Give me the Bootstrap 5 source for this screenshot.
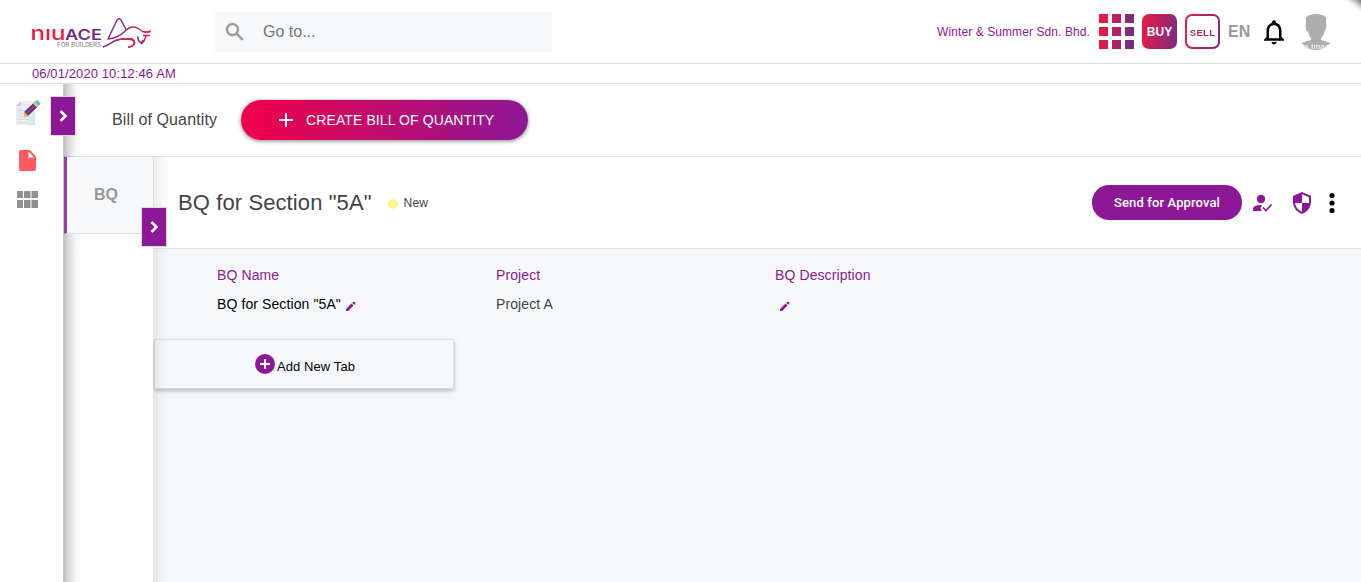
<!DOCTYPE html>
<html lang="en">
<head>
<meta charset="utf-8">
<meta name="viewport" content="width=device-width, initial-scale=1">
<title>Bill of Quantity</title>
<link href="https://cdn.jsdelivr.net/npm/bootstrap@5.3.0/dist/css/bootstrap.min.css" rel="stylesheet">
<style>
:root{--plum:#8c1896;--pale:#f6f8fa;--rule:#dee2e6}
body{font-family:"Liberation Sans",Arial,sans-serif;font-size:14px;line-height:20px;color:#444;overflow:hidden}
svg{display:block;flex:none}
.plum{color:var(--plum)}
.topbar{height:64px;border-bottom:1px solid #dedede;padding-left:31px;padding-right:27px}
.topbar::after{content:"";position:absolute;right:0;top:0;width:18px;height:12px;background:linear-gradient(38deg,transparent 50%,#0000001a 66%,#00000088 100%)}
.logo{margin-top:5px}
.goto{width:337px;height:40px;margin:0 0 0 63px;background:var(--pale);color:#757575;font-size:16px;padding-left:8px;gap:16px}
.company{font-size:12px;letter-spacing:.09px;margin-right:9px}
.tile{width:35px;height:35px;border-radius:7px;font-weight:700}
.buy{background:linear-gradient(100deg,#f0183f,#782b85);color:#fff;font-size:12px;margin-left:8px}
.sell{border:2.5px solid transparent;background:linear-gradient(#fff,#fff) padding-box,linear-gradient(100deg,#f0183f,#782b85) border-box;margin-left:8px;font-size:9.5px;letter-spacing:.3px}
.sell span{background:linear-gradient(90deg,#d01f4e,#782b85);-webkit-background-clip:text;color:transparent;margin-top:2px}
.lang{font-size:16px;font-weight:700;color:#999;margin-left:8px;width:22px}
.clock{height:20px;border-bottom:1px solid #dedede;padding-left:32px;font-size:13px;letter-spacing:.1px;line-height:19px}
.workspace{height:498px}
.rail{width:64px;height:498px;border-right:1px solid #ccc;z-index:3;position:relative}
.rail::after{content:"";position:absolute;left:64px;top:0;bottom:0;width:16px;background:linear-gradient(90deg,rgba(0,0,0,.24),rgba(0,0,0,.12) 35%,rgba(0,0,0,.03) 75%,transparent)}
.toggle{position:absolute;width:26px;height:40px;background:var(--plum);border:1px solid #d7dbe2;z-index:5}
.toggle.one{left:50px;top:12px}
.toggle.two{left:77px;top:50px}
.toolbar{height:73px;border-bottom:1px solid var(--rule);padding-left:48px;gap:24px}
.toolbar .title{font-size:16px;letter-spacing:.12px}
.create{height:40px;width:287px;border-radius:20px;background:linear-gradient(90deg,#f10048,#8c1896);color:#fff;box-shadow:0 1px 4px rgba(0,0,0,.5);padding-left:37px;gap:12px;font-size:14px;letter-spacing:.1px}
.tabs-side{width:89px;height:425px;background:#fff}
.tabs-side::after{content:"";position:absolute;left:89px;top:0;bottom:0;width:16px;background:linear-gradient(90deg,rgba(0,0,0,.075),rgba(0,0,0,.03) 50%,transparent)}
.bq{position:relative;z-index:4;height:77px;background:var(--pale);border-left:3px solid #9440a0;border-bottom:1px solid #dcdfe4;border-right:1px solid #dcdfe4;color:#999;font-size:16px;font-weight:700;width:90px;padding-right:8px}
.content{background:var(--pale)}
.heading{height:92px;background:#fff;border-bottom:1px solid var(--rule);padding-left:25px;padding-right:23px}
.heading h1{font-size:22px;font-weight:400;letter-spacing:.1px;line-height:26px;color:#444}
.dot{width:10px;height:10px;border-radius:50%;background:#fff585;margin:2px 6px 0 16px}
.status{font-size:12px;letter-spacing:.15px;margin-top:1px}
.send{width:150px;height:35px;border-radius:17px;background:var(--plum);color:#fff;font-family:Roboto,sans-serif;font-weight:500;font-size:13px;letter-spacing:.12px}
.fields{padding:16px 0 0 64px;letter-spacing:.1px}
.field{width:279px}
.field .value{margin-top:9px;height:20px}
.newtab{width:300px;height:50px;border:1px solid #dcdfe5;box-shadow:0 2px 4px rgba(0,0,0,.25);margin:25px 0 0 1px;padding-left:2px;color:#000;font-size:13px;letter-spacing:.1px}
</style>
</head>
<body>
<header class="topbar d-flex align-items-center position-relative overflow-hidden">
  <svg class="logo" width="121" height="34" viewBox="31 17 121 34" fill="none">
    <defs><linearGradient id="g" x1="103" y1="0" x2="151" y2="0" gradientUnits="userSpaceOnUse"><stop stop-color="#78308b"/><stop offset=".5" stop-color="#9b2a7b"/><stop offset="1" stop-color="#f01d3c"/></linearGradient></defs>
    <text x="30.500" y="40" textLength="35" lengthAdjust="spacingAndGlyphs" font-family="Inter" font-size="19" font-weight="500" fill="#ed1b43">nıu</text>
    <text x="65" y="40" textLength="37" lengthAdjust="spacingAndGlyphs" font-family="Inter" font-size="14.500" font-weight="600" fill="#782b85">ACE</text>
    <text x="57" y="47" textLength="44" lengthAdjust="spacingAndGlyphs" font-family="Inter" font-size="5.500" fill="#777">FOR BUILDERS</text>
    <path stroke="url(#g)" stroke-width="1.500" stroke-linejoin="round" d="M126 29.500L121 20Q119 17 116.500 21L108 39Q118 38 124 32Q132 24 139 29Q142 31.500 144 32H148.500L150.500 31"/>
    <path d="M103 47C112 44 113 39 124 39C130 39 132 38 134 41C136 45 131 47 128 47" stroke="#782b85" stroke-width="1.500"/>
    <path d="M116 40.200Q121 39 124 39C130 39 132 38 134 41C136 45 131 47 128 47M144 32H148.500L150.500 31M143 35.500H150M146 35.500Q145 41 141.500 43" stroke="#ed1b43" stroke-width="1.500"/>
    <path d="M138 36.500Q137 40 141.500 43.500L143 40" stroke="#782b85" stroke-width="1.500"/>
  </svg>
  <div class="goto d-flex align-items-center">
    <svg width="24" height="24" viewBox="0 0 24 24" fill="#999"><path stroke="#999" stroke-width=".4" d="M15.500 14h-.8l-.3-.3A6.500 6.500 0 1 0 13.700 14.400l.3.3v.8l5 5 1.500-1.500-5-5zm-6 0A4.500 4.500 0 1 1 9.500 5a4.500 4.500 0 0 1 0 9z"/></svg>
    <span>Go to...</span>
  </div>
  <span class="company plum ms-auto">Winter &amp; Summer Sdn. Bhd.</span>
  <svg width="35" height="35" viewBox="0 0 35 35"><defs><linearGradient id="t" x1="0" y1="0" x2="35" y2="5" gradientUnits="userSpaceOnUse"><stop offset=".1" stop-color="#f0183f"/><stop offset="1" stop-color="#782b85"/></linearGradient></defs><path fill="url(#t)" d="M0 0h9v9H0zM13 0h9v9h-9zM26 0h9v9h-9zM0 13h9v9H0zM13 13h9v9h-9zM26 13h9v9h-9zM0 26h9v9H0zM13 26h9v9h-9zM26 26h9v9h-9z"/></svg>
  <div class="tile buy d-flex align-items-center justify-content-center">BUY</div>
  <div class="tile sell d-flex align-items-center justify-content-center"><span>SELL</span></div>
  <div class="lang">EN</div>
  <svg width="30" height="30" viewBox="0 0 24 24" style="margin-left:9px"><path d="M12 22c1.100 0 2-.9 2-2h-4c0 1.100.9 2 2 2zm6-6v-5c0-3.070-1.630-5.640-4.500-6.320V4a1.500 1.500 0 0 0-3 0v.68C7.640 5.360 6 7.920 6 11v5l-2 2v1h16v-1l-2-2zm-2 1H8v-6c0-2.480 1.510-4.500 4-4.500s4 2.020 4 4.500v6z"/></svg>
  <svg style="margin-left:9px" width="36" height="36" viewBox="0 0 36 36"><defs><clipPath id="c"><circle cx="18" cy="18" r="18"/></clipPath></defs><g clip-path="url(#c)"><path fill="#aeaeae" d="M11 0h14q3 1 3 5v5q1 1 0 5-1 1-1.500 3-1 4-3.500 6v2q4 1 12 4v6H0v-6q9-3 13-4v-2q-2-2-3-6-2-1-2-3-1-4 0-5V5q0-4 3-5z"/><text x="0" y="35" font-size="8" fill="#fff" textLength="36">No Image</text></g></svg>
</header>
<div class="clock plum">06/01/2020 10:12:46 AM</div>

<div class="workspace d-flex position-relative overflow-hidden">
  <nav class="rail bg-white flex-shrink-0">
    <svg width="63" height="130" viewBox="0 84 63 130">
      <path fill="#e9edf2" d="M21 101h14v24H16v-19z"/><path fill="#c5ced6" d="M21 101v5h-5z"/>
      <path stroke="#d3dae1" d="M18 110.500h14M18 113.500h12M18 116.500h12M18 119.500h14M18 122.500h12"/><path fill="#d8e7f0" d="M35 108v17h-8z"/>
      <path stroke="#62306f" stroke-width="5.500" d="M26 114L36 104.500"/><path stroke="#8c3a93" stroke-width="2" d="M26 114L36 104.500"/>
      <path fill="#f8b64c" d="M24 112l4 4-4 1.500z"/><path stroke="#f8c76f" stroke-width="5.500" d="M35 105.500l1.500-1.500"/><path stroke="#5bc6c0" stroke-width="5.500" d="M36.500 104l2.500-2.300"/>
      <path fill="#ff5a5f" d="M21 150h9l6 6.500V169q0 2-2 2H21q-2 0-2-2v-17q0-2 2-2z"/><path fill="#fff" d="M28.500 151.500v6H34z"/>
      <path fill="#909090" d="M17 191h6v7h-6zM24 191h6.500v7H24zM31.500 191H38v7h-6.500zM17 200h6v8h-6zM24 200h6.500v8H24zM31.500 200H38v8h-6.500z"/>
    </svg>
  </nav>
  <div class="toggle one d-flex align-items-center justify-content-center"><svg width="10" height="14" viewBox="0 0 10 14" fill="none" stroke="#fff" stroke-width="2.500"><path d="M2.500 2l5 5-5 5"/></svg></div>
  <div class="flex-grow-1">
    <div class="toolbar d-flex align-items-center">
      <span class="title">Bill of Quantity</span>
      <div class="create d-flex align-items-center"><svg width="16" height="16" viewBox="0 0 16 16" stroke="#fff" stroke-width="2"><path d="M8 1v14M1 8h14"/></svg><span>CREATE BILL OF QUANTITY</span></div>
    </div>
    <div class="d-flex">
      <aside class="tabs-side position-relative flex-shrink-0">
        <div class="bq d-flex align-items-center justify-content-center">BQ</div>
        <div class="toggle two d-flex align-items-center justify-content-center"><svg width="10" height="14" viewBox="0 0 10 14" fill="none" stroke="#fff" stroke-width="2.500"><path d="M2.500 2l5 5-5 5"/></svg></div>
      </aside>
      <main class="content flex-grow-1">
        <div class="heading d-flex align-items-center">
          <h1 class="m-0">BQ for Section "5A"</h1><span class="dot"></span><span class="status">New</span>
          <div class="send ms-auto d-flex align-items-center justify-content-center">Send for Approval</div>
          <svg style="margin-left:10px" width="22" height="20" viewBox="1252 193 22 20" fill="#8c1896"><circle cx="1261" cy="199" r="4.200"/><path d="M1253 211v-2q0-4 8-4 1.500 0 1 .8-2.500 2-.3 5.200z"/><path d="M1263 207.500l3 3 5.500-6" fill="none" stroke="#8c1896" stroke-width="1.700"/></svg>
          <svg style="margin-left:18px" width="20" height="22" viewBox="0 0 20 22"><path fill="#8c1896" d="M10 0l9 4v6c0 5-3.500 10-9 12C4.500 20 1 15 1 10V4z"/><path fill="#fff" d="M10 2.300L17 5.300V11H10zM10 11v8.800C6 18 3.500 15 3 11z"/></svg>
          <svg style="margin-left:14px" width="12" height="22" viewBox="0 0 12 22"><circle cx="6" cy="3.500" r="2.600"/><circle cx="6" cy="11" r="2.600"/><circle cx="6" cy="18.500" r="2.600"/></svg>
        </div>
        <div class="fields d-flex">
          <div class="field"><div class="plum">BQ Name</div><div class="value d-flex align-items-center text-black">BQ for Section "5A"<svg style="margin:4px 0 0 5px" width="10" height="10" viewBox="0 0 10 10" fill="#8c1896"><path d="M0 10V8l5.500-5.500 2 2L2 10zM6.200 1.900L8 .5l1.700 1.600-1.500 1.700z"/></svg></div></div>
          <div class="field"><div class="plum">Project</div><div class="value">Project A</div></div>
          <div class="field"><div class="plum">BQ Description</div><div class="value d-flex align-items-center"><svg style="margin:4px 0 0 5px" width="10" height="10" viewBox="0 0 10 10" fill="#8c1896"><path d="M0 10V8l5.500-5.500 2 2L2 10zM6.200 1.900L8 .5l1.700 1.600-1.500 1.700z"/></svg></div></div>
        </div>
        <div class="newtab d-flex align-items-center justify-content-center"><svg style="margin:0 2px 0 0" width="20" height="20" viewBox="0 0 20 20"><circle cx="10" cy="10" r="10" fill="#8c1896"/><path d="M10 5v10M5 10h10" stroke="#fff" stroke-width="2"/></svg><span style="margin-top:5px">Add New Tab</span></div>
      </main>
    </div>
  </div>
</div>
<script src="https://cdn.jsdelivr.net/npm/bootstrap@5.3.0/dist/js/bootstrap.bundle.min.js"></script>
</body>
</html>
